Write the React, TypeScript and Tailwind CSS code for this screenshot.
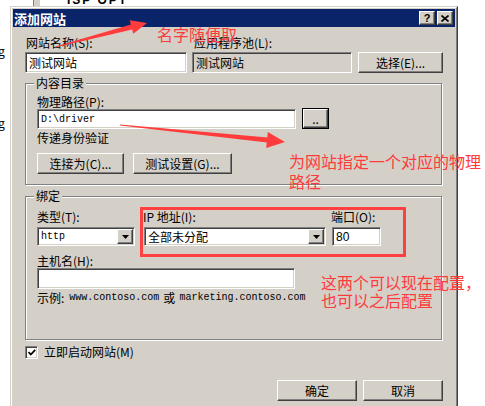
import React from 'react';

const ui = "font-['Noto_Sans_CJK_SC','Noto_Sans',sans-serif] text-[12px] leading-[14px] text-black";
const mono = "font-['Liberation_Mono','Noto_Sans_CJK_SC',monospace] text-[10px]";

const sunken =
  'border border-t-[#808080] border-l-[#808080] border-b-white border-r-white shadow-[inset_1px_1px_0_#404040,inset_-1px_-1px_0_#d4d0c8]';
const raised =
  'border border-t-white border-l-white border-b-[#404040] border-r-[#404040] shadow-[inset_-1px_-1px_0_#808080] bg-[#d4d0c8]';

const Btn: React.FC<{ label: string; className?: string }> = ({ label, className = '' }) => (
  <div className={`${raised} flex items-center justify-center ${className}`}>
    <span className={ui}>{label}</span>
  </div>
);

const Input: React.FC<{ value?: string; className?: string; disabled?: boolean; font?: string }> = ({
  value = '',
  className = '',
  disabled,
  font = ui,
}) => (
  <div className={`${sunken} ${disabled ? 'bg-[#d4d0c8]' : 'bg-white'} flex items-center pl-[3px] ${className}`}>
    <span className={font}>{value}</span>
  </div>
);

const Select: React.FC<{ value: string; className?: string; font?: string }> = ({ value, className = '', font = ui }) => (
  <div className={`${sunken} bg-white flex items-center justify-between pl-[3px] pr-px ${className}`}>
    <span className={font}>{value}</span>
    <div className={`${raised} w-[16px] h-[15px] flex items-center justify-center`}>
      <svg width="7" height="4" viewBox="0 0 7 4">
        <path d="M0 0h7L3.5 4z" fill="#000" />
      </svg>
    </div>
  </div>
);

const Group: React.FC<{ title: string; className?: string; children: React.ReactNode }> = ({ title, className = '', children }) => (
  <div className={`relative border border-[#808080] shadow-[inset_1px_1px_0_#fff,1px_1px_0_#fff] ${className}`}>
    <span className={`${ui} absolute left-[8px] -top-[8px] bg-[#d4d0c8] px-[2px]`}>{title}</span>
    {children}
  </div>
);

export default function App() {
  return (
    <div className="relative w-[485px] h-[406px] overflow-hidden bg-white">
      {/* window behind the dialog */}
      <div className="absolute left-[33px] top-0 w-[7px] h-[8px] bg-[#d4d0c8] border-l border-[#808080]" />
      <span className="absolute left-[67px] -top-[9px] font-['Liberation_Sans',sans-serif] text-[12px] font-bold tracking-[2px]">ISP OPT</span>
      <span className={`${ui} absolute -left-[2px] top-[44px]`}>g</span>
      <span className={`${ui} absolute -left-[2px] top-[116px]`}>g</span>

      <div className="relative mt-[6px] ml-[10px] w-[448px] h-[420px] bg-[#d4d0c8] border border-t-[#d4d0c8] border-l-[#d4d0c8] border-b-[#404040] border-r-[#404040]">
        <div className="h-full border border-t-white border-l-white border-b-[#808080] border-r-[#808080] p-px">
          {/* title bar */}
          <div className="h-[18px] bg-[#0a246a] flex items-center justify-between pl-px pr-[2px]">
            <span className="font-['Noto_Sans_CJK_SC',sans-serif] text-[13px] font-bold text-white leading-[15px]">添加网站</span>
            <div className="flex gap-[2px]">
              <div className={`${raised} w-[16px] h-[14px] flex items-center justify-center`}>
                <span className="font-['Liberation_Sans',sans-serif] text-[11px] font-bold leading-none">?</span>
              </div>
              <div className={`${raised} w-[16px] h-[14px] flex items-center justify-center`}>
                <svg width="8" height="7" viewBox="0 0 8 7">
                  <path d="M0.5 0.5L7.5 6.5M7.5 0.5L0.5 6.5" stroke="#000" strokeWidth="1.6" />
                </svg>
              </div>
            </div>
          </div>

          <div className="px-[12px]">
            <div className="mt-[9px] flex">
              <span className={`${ui} w-[167px] pl-px`}>网站名称(S):</span>
              <span className={`${ui} pl-[2px] text-[#808080]`}>应用程序池(L):</span>
            </div>
            <div className="mt-[2px] flex gap-[5px]">
              <Input value="测试网站" className="w-[162px] h-[21px]" />
              <Input value="测试网站" disabled className="w-[160px] h-[21px]" />
              <Btn label="选择(E)..." className="ml-px w-[85px] h-[21px]" />
            </div>

            <Group title="内容目录" className="mt-[10px] h-[102px] w-[417px] pt-[11px] pl-[11px]">
              <div className={ui}>物理路径(P):</div>
              <div className="flex gap-[6px] items-start">
                <Input value="D:\driver" font={mono} className="w-[259px] h-[20px]" />
                <div className="-mt-px border border-black">
                  <Btn label=".." className="w-[25px] h-[19px]" />
                </div>
              </div>
              <div className={`${ui} mt-[2px]`}>传递身份验证</div>
              <div className="mt-[8px] flex gap-[9px]">
                <Btn label="连接为(C)..." className="w-[87px] h-[21px]" />
                <Btn label="测试设置(G)..." className="w-[99px] h-[21px]" />
              </div>
            </Group>

            <Group title="绑定" className="mt-[11px] h-[144px] w-[417px] pt-[13px] pl-[11px]">
              <div className="flex">
                <div className="w-[98px]">
                  <div className={ui}>类型(T):</div>
                  <Select value="http" font={mono} className="mt-[3px] h-[19px]" />
                </div>
                <div className="ml-[9px] w-[182px]">
                  <div className={`${ui} -ml-px`}>IP 地址(I):</div>
                  <Select value="全部未分配" className="mt-[3px] h-[19px]" />
                </div>
                <div className="ml-[6px] w-[49px]">
                  <div className={`${ui} -ml-px`}>端口(O):</div>
                  <Input value="80" font="font-['Liberation_Sans',sans-serif] text-[12px]" className="mt-[3px] h-[19px]" />
                </div>
              </div>
              <div className={`${ui} mt-[8px] leading-[13px]`}>主机名(H):</div>
              <Input className="w-[258px] h-[21px]" />
              <div className={`${ui} mt-[2px] flex items-center`}>
                <span>示例:</span>
                <span className={`${mono} ml-[5px]`}>www.contoso.com</span>
                <span className="mx-[4px]">或</span>
                <span className={mono}>marketing.contoso.com</span>
              </div>
            </Group>

            <div className="mt-[5px] flex items-center gap-[6px]">
              <div className={`${sunken} bg-white w-[13px] h-[13px] flex items-center justify-center`}>
                <svg width="8" height="7" viewBox="0 0 8 7">
                  <path d="M0.5 3l2.3 2.5L7.2 0.8" stroke="#000" strokeWidth="1.8" fill="none" />
                </svg>
              </div>
              <span className={ui}>立即启动网站(M)</span>
            </div>

            <div className="mt-[21px] flex justify-end gap-[6px]">
              <Btn label="确定" className="w-[80px] h-[21px]" />
              <Btn label="取消" className="w-[80px] h-[21px]" />
            </div>
          </div>
        </div>
      </div>

      {/* annotations */}
      <svg className="absolute left-0 top-0 pointer-events-none" width="485" height="406" viewBox="0 0 485 406">
        <polygon points="55,47.5 55.4,46.5 131,24.6 132.2,29.4" fill="#ff3b3b" />
        <polygon points="147,23 133.3,33.8 129.7,20.2" fill="#ff3b3b" />
        <polygon points="120,124.5 120.1,125.5 267.3,142.5 267.8,137.5" fill="#ff3b3b" />
        <polygon points="285,142 266.2,148 267.8,132" fill="#ff3b3b" />
      </svg>
      <div className="absolute left-[140px] top-[207px] w-[266px] h-[50px] border-[3px] border-[#ff4040]" />
      <div className="absolute left-[157px] top-[25px] font-['Noto_Sans_CJK_SC',sans-serif] text-[16px] leading-[18px] text-[#ff3b3b] whitespace-nowrap">
        名字随便取
      </div>
      <div className="absolute left-[289px] top-[151px] font-['Noto_Sans_CJK_SC',sans-serif] text-[16px] leading-[20px] text-[#ff3b3b] whitespace-nowrap">
        为网站指定一个对应的物理
        <br />
        路径
      </div>
      <div className="absolute left-[321px] top-[273px] font-['Noto_Sans_CJK_SC',sans-serif] text-[16px] leading-[18px] text-[#ff3b3b] whitespace-nowrap">
        这两个可以现在配置，
        <br />
        也可以之后配置
      </div>
    </div>
  );
}
